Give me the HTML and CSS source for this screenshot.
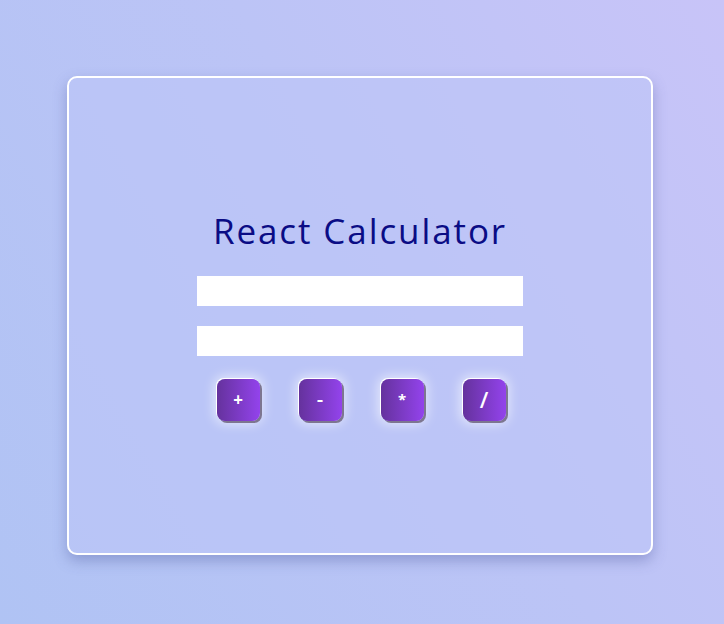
FILE: index.html
```html
<!DOCTYPE html>
<html>
<head>
<meta charset="utf-8">
<link rel="stylesheet" href="styles.css">
</head>
<body>
<div class="page">
  <div class="card">
    <h1 class="title">React Calculator</h1>
    <input class="field" type="text">
    <input class="field" type="text">
    <div class="ops">
      <button class="op">+</button>
      <button class="op op-minus">-</button>
      <button class="op op-star">*</button>
      <button class="op op-slash">/</button>
    </div>
  </div>
</div>
</body>
</html>
```
FILE: styles.css
```css
html, body {
  margin: 0;
  padding: 0;
  height: 100%;
}
body {
  background: linear-gradient(60deg, #b0c3f4 0%, #bcc4f6 55%, #c8c4f8 100%);
  font-family: "Open Sans", "DejaVu Sans", sans-serif;
}
.page {
  height: 624px;
  padding-top: 76px;
  box-sizing: border-box;
  display: flex;
  justify-content: center;
}
.card {
  width: 586px;
  height: 479px;
  box-sizing: border-box;
  margin-left: -4px;
  border: 2px solid #ffffff;
  border-radius: 10px;
  background: rgba(190, 198, 248, 0.55);
  box-shadow: 0 6px 14px rgba(70, 80, 150, 0.35);
  display: flex;
  flex-direction: column;
  align-items: center;
  padding-top: 133px;
}
.title {
  margin: 0 0 25px 0;
  font-weight: 400;
  font-size: 35px;
  line-height: 40px;
  color: #0a0c85;
  letter-spacing: 1.9px;
  padding-left: 0;
}
.field {
  width: 326px;
  height: 30px;
  border: none;
  outline: none;
  background: #ffffff;
  margin: 0 0 20px 0;
  padding: 0;
  display: block;
}
.ops {
  margin-top: 3px;
  display: flex;
  gap: 39px;
  margin-left: 2px;
}
.op {
  width: 43px;
  height: 42px;
  border: none;
  border-radius: 8px;
  background: linear-gradient(90deg, #65329d 0%, #9343ec 100%);
  color: #ffffff;
  font-family: "Open Sans", "DejaVu Sans", sans-serif;
  font-weight: 700;
  font-size: 17px;
  line-height: 1;
  padding: 0 0 2px 0;
  box-shadow: -1px -1px 0 0 #ffffff, 2px 2px 0 0 #7d7690, 0 0 12px 3px rgba(255, 255, 255, 0.6);
}
.op-minus {
  font-size: 20px;
  font-weight: 600;
}
.op-star {
  font-size: 15px;
}
.op-slash {
  font-size: 22px;
  font-weight: 600;
}
```
